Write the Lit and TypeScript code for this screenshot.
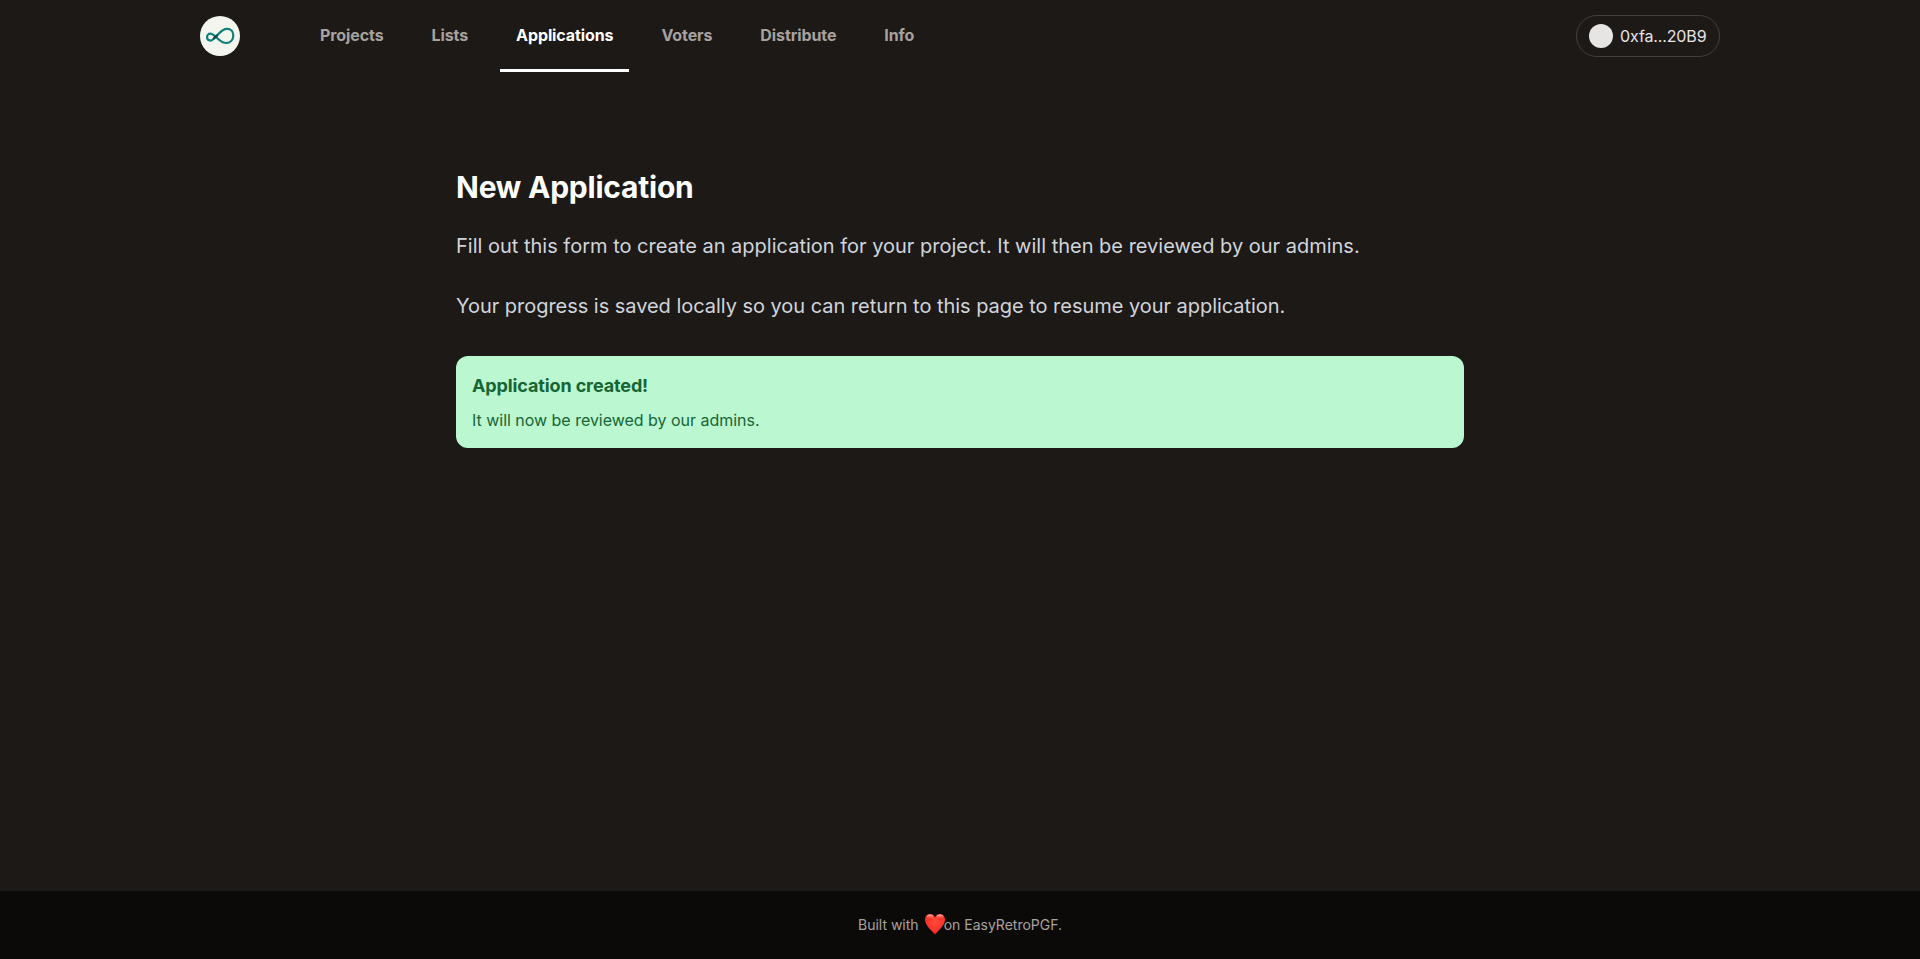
import { LitElement, html, css } from "lit";
import { customElement } from "lit/decorators.js";
import { classMap } from "lit/directives/class-map.js";

const links = ["Projects", "Lists", "Applications", "Voters", "Distribute", "Info"];

@customElement("app-root")
export class AppRoot extends LitElement {
  static styles = css`
    :host {
      display: flex;
      flex-direction: column;
      min-height: 100vh;
      background: #1c1917;
      color: #fff;
      font-family: Inter, sans-serif;
      font-size: 16px;
      line-height: 24px;
    }
    * { box-sizing: border-box; margin: 0; }
    .header {
      display: flex;
      align-items: center;
      width: 1520px;
      height: 72px;
      margin: 0 auto;
    }
    .logo { display: block; width: 40px; height: 40px; }
    .nav { display: flex; gap: 16px; height: 72px; margin-left: 64px; }
    .link {
      padding: 23px 16px 0;
      border-bottom: 3px solid transparent;
      color: #a8a29e;
      font-weight: 650;
      letter-spacing: -0.1px;
    }
    .link.active { color: #fff; border-color: #fff; }
    .wallet {
      display: flex;
      align-items: center;
      gap: 7px;
      width: 144px;
      height: 42px;
      margin-left: auto;
      padding: 0 12px;
      border: 1px solid #44403c;
      border-radius: 21px;
      color: #e7e5e4;
      letter-spacing: -0.13px;
      white-space: nowrap;
    }
    .avatar { flex: none; width: 24px; height: 24px; border-radius: 50%; background: #e7e5e4; }
    .main { flex: 1; width: 1008px; margin: 0 auto; padding-top: 96px; }
    .title { font-size: 30px; line-height: 36px; font-weight: 700; padding: 1px 0; letter-spacing: -0.23px; }
    .intro {
      margin-top: 24px;
      color: #d1d5db;
      font-size: 20px;
      line-height: 32px;
    }
    .intro + .intro { margin-top: 28px; letter-spacing: -0.035px; }
    .alert {
      margin-top: 34px;
      padding: 16px;
      border-radius: 12px;
      background: #bbf7d0;
      color: #166534;
      letter-spacing: -0.02px;
    }
    .alert-title { font-size: 18px; line-height: 28px; font-weight: 700; margin-bottom: 8px; letter-spacing: -0.12px; }
    .footer {
      display: flex;
      align-items: center;
      justify-content: center;
      height: 68px;
      background: #0c0a09;
      color: #a8a29e;
      font-size: 14px;
      line-height: 20px;
    }
    .heart { display: block; width: 20px; height: 22px; margin: 0 -1px 3px 6px; }
  `;

  render() {
    return html`
      <header class="header">
        <svg class="logo" viewBox="0 0 40 40">
          <circle cx="20" cy="20" r="20" fill="#f5f5ef" />
          <g fill="none" stroke="#0d8078" stroke-width="2.200" stroke-linecap="round">
            <path d="M15.700 20.700C19 18 21.500 12.800 27 12.800C31 12.800 33.300 15.600 33.300 19.200C33.300 23.800 30.400 27 26.200 27C21.500 27 18.800 23.300 15.700 20.700C13.700 19 12.500 17.600 10.400 17.600C8.400 17.600 7 19.200 7 21.100C7 23.100 8.500 24.600 10.500 24.600C12.700 24.600 14 22.300 15.700 20.700Z" />
            <path d="M14 22.300C14.900 21.300 15.800 20.600 17 19.500" stroke="#134447" />
          </g>
        </svg>
        <nav class="nav">
          ${links.map(
            (l) => html`<a class=${classMap({ link: true, active: l === "Applications" })}>${l}</a>`
          )}
        </nav>
        <div class="wallet"><span class="avatar"></span><span>0xfa...20B9</span></div>
      </header>
      <main class="main">
        <h1 class="title">New Application</h1>
        <p class="intro">Fill out this form to create an application for your project. It will then be reviewed by our admins.</p>
        <p class="intro">Your progress is saved locally so you can return to this page to resume your application.</p>
        <section class="alert">
          <h2 class="alert-title">Application created!</h2>
          <p>It will now be reviewed by our admins.</p>
        </section>
      </main>
      <footer class="footer">
        <span>Built with</span>
        <svg class="heart" viewBox="0 0 20 22">
          <defs>
            <radialGradient id="red" cx="0.5" cy="0.4" r="0.65">
              <stop offset="0" stop-color="#ff4a3a" />
              <stop offset="0.7" stop-color="#fb3228" />
              <stop offset="1" stop-color="#c9150f" />
            </radialGradient>
            <linearGradient id="shine" x1="0" y1="0" x2="0" y2="1">
              <stop offset="0" stop-color="#ffc9bf" stop-opacity="0.9" />
              <stop offset="1" stop-color="#ff5a48" stop-opacity="0" />
            </linearGradient>
          </defs>
          <path fill="url(#red)" d="M10 4.300C8.900 2.200 7.200 1 5 1C2.100 1 0 3.300 0 6.500C0 12 5.600 16.500 10 21.500C14.400 16.500 20 12 20 6.500C20 3.300 17.900 1 15 1C12.800 1 11.100 2.200 10 4.300Z" />
          <ellipse cx="5" cy="3.800" rx="3.500" ry="2.200" fill="url(#shine)" />
          <ellipse cx="15" cy="3.800" rx="3.500" ry="2.200" fill="url(#shine)" />
        </svg>
        <span>on EasyRetroPGF.</span>
      </footer>
    `;
  }
}
